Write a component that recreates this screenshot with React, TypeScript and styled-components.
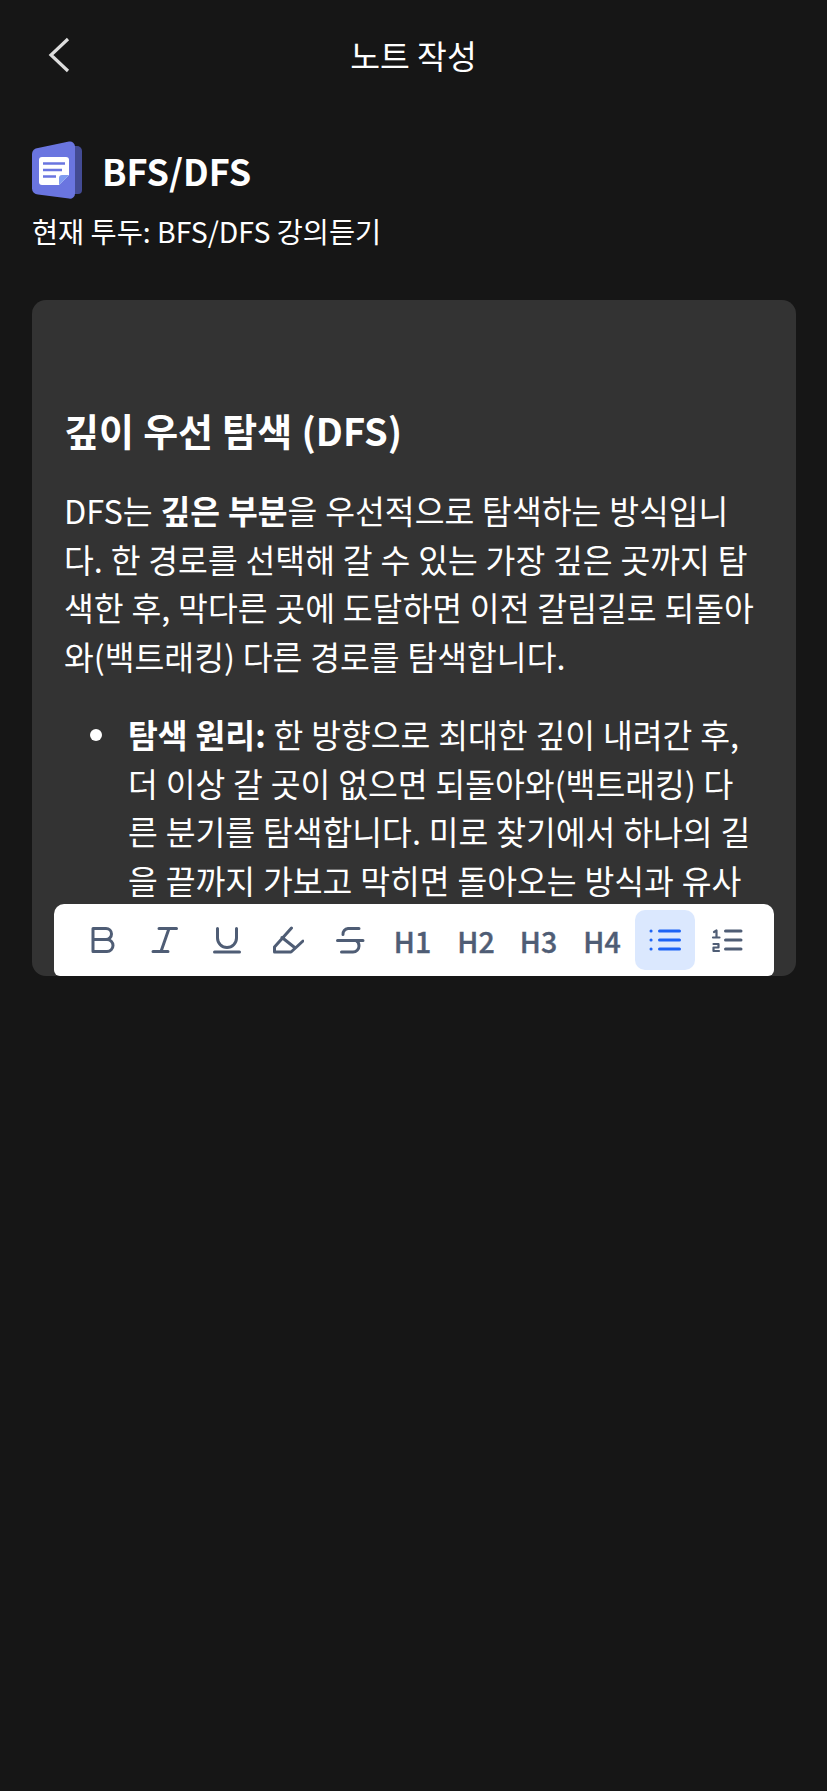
import React from 'react';
import styled, { createGlobalStyle } from 'styled-components';

const GlobalStyle = createGlobalStyle`
  html, body {
    margin: 0;
    padding: 0;
    background: #161616;
  }
  body {
    font-family: "Noto Sans CJK KR", "Noto Sans", sans-serif;
    color: #ffffff;
  }
`;

const Page = styled.div`
  width: 827px;
  height: 1791px;
  background: #161616;
  overflow: hidden;
`;

const Header = styled.header`
  position: relative;
  height: 110px;
  display: flex;
  align-items: center;
  justify-content: center;
`;

const BackButton = styled.button`
  position: absolute;
  left: 44px;
  top: 35px;
  width: 30px;
  height: 40px;
  padding: 0;
  border: 0;
  background: none;
  display: flex;
`;

const HeaderTitle = styled.h1`
  margin: 0;
  font-size: 32.4px;
  font-weight: 400;
  line-height: 46px;
`;

const Section = styled.section`
  padding: 31px 31px 0 32px;
`;

const TitleRow = styled.div`
  display: flex;
  align-items: center;
  gap: 20px;
`;

const NoteTitle = styled.h2`
  margin: 0;
  font-size: 36px;
  font-weight: 700;
  line-height: 56px;
`;

const TodoLabel = styled.p`
  margin: 12px 0 0;
  font-size: 28.4px;
  line-height: 40px;
  font-weight: 400;
`;

const Card = styled.div`
  position: relative;
  margin-top: 49px;
  height: 676px;
  background: #333333;
  border-radius: 14px;
  overflow: hidden;
`;

const Editor = styled.div`
  padding: 102px 41px 0 32px;
  word-spacing: 0.6px;
`;

const EditorHeading = styled.h3`
  margin: 0 0 28px;
  font-size: 38px;
  line-height: 56px;
  font-weight: 700;
`;

const Paragraph = styled.p`
  margin: 0 0 30px;
  font-size: 32.4px;
  line-height: 48.5px;
`;

const BulletList = styled.ul`
  margin: 0;
  padding: 0 0 0 64px;
  list-style: none;
  font-size: 32.4px;
  line-height: 48.5px;
`;

const BulletItem = styled.li`
  position: relative;
  &::before {
    content: '';
    position: absolute;
    left: -38px;
    top: 19px;
    width: 12px;
    height: 12px;
    border-radius: 50%;
    background: #ffffff;
  }
`;

const Toolbar = styled.div`
  position: absolute;
  left: 22px;
  bottom: 0;
  width: 720px;
  height: 72px;
  box-sizing: border-box;
  padding: 6px 17px 6px 18px;
  display: flex;
  justify-content: space-between;
  background: #ffffff;
  border-radius: 10px 10px 6px 6px;
`;

const ToolButton = styled.button<{ $active?: boolean; $nudge?: number }>`
  width: 60px;
  height: 60px;
  padding: 0 ${({ $nudge }) => $nudge ?? 0}px 0 0;
  border: 0;
  border-radius: 10px;
  background: ${({ $active }) => ($active ? '#dbe8fe' : 'transparent')};
  color: ${({ $active }) => ($active ? '#1d63f5' : '#4f5d75')};
  font-family: inherit;
  font-size: 28.5px;
  font-weight: 500;
  -webkit-text-stroke: 0.4px currentColor;
  display: flex;
  align-items: center;
  justify-content: center;
`;

const NoteIcon = () => (
  <svg width="50" height="58" viewBox="0 0 50 58" fill="none">
    <path d="M40 5h5a5 5 0 0 1 5 5v39a4 4 0 0 1-4 4h-6z" fill="#434b94" />
    <path
      d="M6 7 37 .6a5 5 0 0 1 6 5v47a5 5 0 0 1-6 5L6 53.5a6 6 0 0 1-6-6V13a6 6 0 0 1 6-6z"
      fill="#6a75e0"
    />
    <path d="M7 19a3 3 0 0 1 3-3h24a3 3 0 0 1 3 3v15L27 44H10a3 3 0 0 1-3-3z" fill="#ffffff" />
    <path d="M27 44v-7a3 3 0 0 1 3-3h7z" fill="#7f9bf0" />
    <path d="M11 22.5h22M11 29h19M11 35.5h13" stroke="#6a75e0" strokeWidth="2.4" />
  </svg>
);

const Stroke: React.FC<{ children: React.ReactNode }> = ({ children }) => (
  <svg
    width="32"
    height="32"
    viewBox="0 0 32 32"
    fill="none"
    stroke="currentColor"
    strokeWidth="3"
    strokeLinecap="round"
    strokeLinejoin="round"
  >
    {children}
  </svg>
);

const tools = [
  { label: 'H1', nudge: 4 },
  { label: 'H2', nudge: 2 },
  { label: 'H3', nudge: 2 },
  { label: 'H4', nudge: 0 },
];

const App: React.FC = () => (
  <Page>
    <GlobalStyle />
    <Header>
      <BackButton aria-label="back">
        <svg width="30" height="40" viewBox="0 0 30 40" fill="none">
          <path d="M24 4 7 20l17 16" stroke="#dddddd" strokeWidth="3.2" />
        </svg>
      </BackButton>
      <HeaderTitle>노트 작성</HeaderTitle>
    </Header>
    <Section>
      <TitleRow>
        <NoteIcon />
        <NoteTitle>BFS/DFS</NoteTitle>
      </TitleRow>
      <TodoLabel>현재 투두: BFS/DFS 강의듣기</TodoLabel>
      <Card>
        <Editor>
          <EditorHeading>깊이 우선 탐색 (DFS)</EditorHeading>
          <Paragraph>
            DFS는 <strong>깊은 부분</strong>을 우선적으로 탐색하는 방식입니다. 한 경로를 선택해 갈 수 있는 가장 깊은 곳까지 탐색한 후, 막다른 곳에 도달하면 이전 갈림길로 되돌아와(백트래킹) 다른 경로를 탐색합니다.
          </Paragraph>
          <BulletList>
            <BulletItem>
              <strong>탐색 원리:</strong> 한 방향으로 최대한 깊이 내려간 후, 더 이상 갈 곳이 없으면 되돌아와(백트래킹) 다른 분기를 탐색합니다. 미로 찾기에서 하나의 길을 끝까지 가보고 막히면 돌아오는 방식과 유사합니다.
            </BulletItem>
          </BulletList>
        </Editor>
        <Toolbar>
          <ToolButton aria-label="bold">
            <Stroke>
              <path d="M7 4.5h13a5.5 5.5 0 0 1 0 11H7zM7 15.5h14a6 6 0 0 1 0 12H7z" />
            </Stroke>
          </ToolButton>
          <ToolButton aria-label="italic">
            <Stroke>
              <path d="M10 4.5h17.5M4 27.5h15M20 4.5l-8 23" />
            </Stroke>
          </ToolButton>
          <ToolButton aria-label="underline">
            <Stroke>
              <path d="M6.5 4.5V14a9.5 9.5 0 0 0 19 0V4.5M3.5 28h25" />
            </Stroke>
          </ToolButton>
          <ToolButton aria-label="highlight" $nudge={4}>
            <Stroke>
              <path d="M19.5 4 2.5 23v5H19l5-4.5 7-6.5M10 13.5l12 9.5" />
            </Stroke>
          </ToolButton>
          <ToolButton aria-label="strike" $nudge={2}>
            <Stroke>
              <path d="M24 4.5H13a5.5 5.5 0 0 0-5 6M2.5 16.5H28M21 16.5a6 6 0 0 1 3 5.5 6 6 0 0 1-6 6H6.5" />
            </Stroke>
          </ToolButton>
          {tools.map(tool => (
            <ToolButton key={tool.label} $nudge={tool.nudge}>
              {tool.label}
            </ToolButton>
          ))}
          <ToolButton $active aria-label="bullet list">
            <Stroke>
              <path d="M10.5 7H30.5M10.5 16H30.5M10.5 25H30.5" />
              <path d="M2 7h.1M2 16h.1M2 25h.1" />
            </Stroke>
          </ToolButton>
          <ToolButton aria-label="ordered list">
            <Stroke>
              <path d="M14.5 7H30M14.5 16H30M14.5 25H30" />
              <path d="M3 8l2.5-1.5V13M2 13.5h6.5" strokeWidth="2.2" />
              <path d="M2.5 20h5v3.5H2.5V27H8" strokeWidth="2.2" />
            </Stroke>
          </ToolButton>
        </Toolbar>
      </Card>
    </Section>
  </Page>
);

export default App;
